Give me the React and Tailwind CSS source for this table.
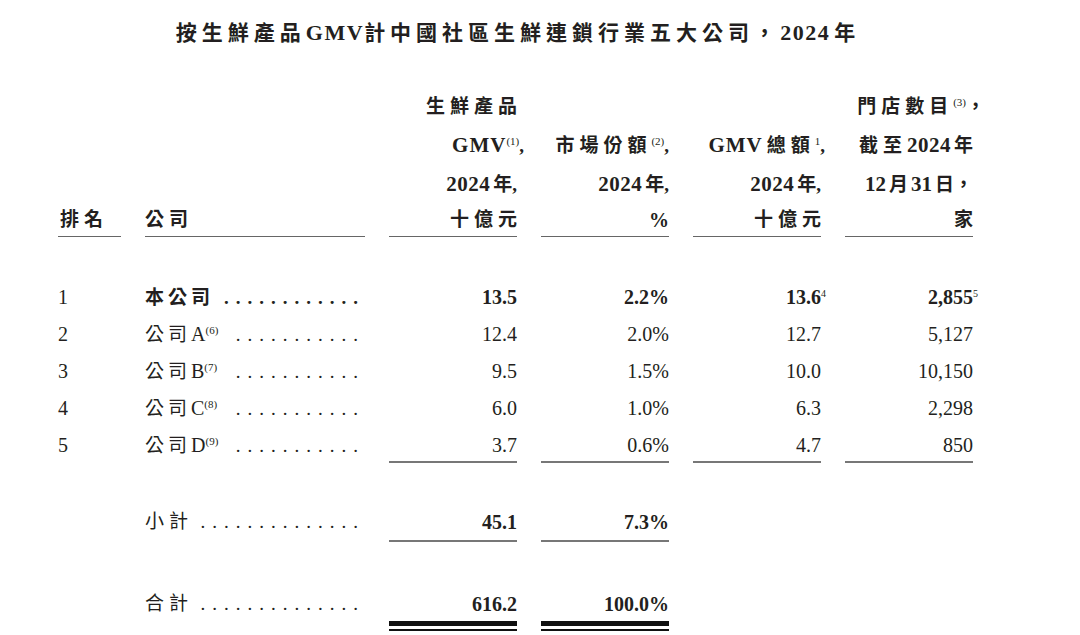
import React from 'react';

const cols = 'grid grid-cols-[63px_220px_128px_128px_128px_128px] gap-x-6';

function Sup({ children }) {
  return <span className="text-[11px] leading-none align-[7px] font-normal">{children}</span>;
}

function Leader({ n }) {
  return (
    <span className="flex-1 flex justify-end">
      <span className="shrink-0 whitespace-nowrap tracking-[7px]">{'.'.repeat(n)}</span>
    </span>
  );
}

const rows = [
  { rank: '1', name: '本公司', sup: '', bold: true, v: ['13.5', '2.2%', '13.6', '2,855'], s: ['4', '5'] },
  { rank: '2', name: '公司', letter: 'A', sup: '(6)', v: ['12.4', '2.0%', '12.7', '5,127'] },
  { rank: '3', name: '公司', letter: 'B', sup: '(7)', v: ['9.5', '1.5%', '10.0', '10,150'] },
  { rank: '4', name: '公司', letter: 'C', sup: '(8)', v: ['6.0', '1.0%', '6.3', '2,298'] },
  { rank: '5', name: '公司', letter: 'D', sup: '(9)', v: ['3.7', '0.6%', '4.7', '850'], last: true },
];

export default function App() {
  return (
    <div className="w-[1080px] h-[635px] bg-white overflow-hidden text-[#231f20] font-['Liberation_Serif','Noto_Sans_CJK_TC',serif]">
      <div className="ml-[58px] w-[915px] pt-[18px]">
        {/* Title */}
        <h1 className="text-center text-[21px] leading-[30px] font-bold">
          <span className="tracking-[5px]">按生鮮產品</span>
          <span className="text-[22px] tracking-[1.5px]">GMV</span>
          <span className="tracking-[5px]">計中國社區生鮮連鎖行業五大公司，</span>
          <span className="text-[22px] tracking-[1.5px]">2024</span>
          <span className="ml-[4px]">年</span>
        </h1>

        {/* Header */}
        <div className={`${cols} items-end mt-[40px] text-[19px] font-bold`}>
          <div className="border-b-[1.5px] border-[#666] leading-[32px] pl-[2px]">
            <span className="tracking-[5px]">排名</span>
          </div>
          <div className="border-b-[1.5px] border-[#666] leading-[32px]">
            <span className="tracking-[5px]">公司</span>
          </div>
          <div className="border-b-[1.5px] border-[#666] text-right">
            <div className="leading-[38px]"><span className="tracking-[5px] mr-[-5px]">生鮮產品</span></div>
            <div className="leading-[38px] mr-[-7px]"><span className="text-[21px] tracking-[1px]">GMV</span><Sup>(1)</Sup>,</div>
            <div className="leading-[38px]"><span className="text-[21px] tracking-[0.5px]">2024</span><span className="ml-[3px]">年</span>,</div>
            <div className="leading-[32px]"><span className="tracking-[5px] mr-[-5px]">十億元</span></div>
          </div>
          <div className="border-b-[1.5px] border-[#666] text-right">
            <div className="leading-[38px]"><span className="tracking-[5px]">市場份額</span><Sup>(2)</Sup>,</div>
            <div className="leading-[38px]"><span className="text-[21px] tracking-[0.5px]">2024</span><span className="ml-[3px]">年</span>,</div>
            <div className="leading-[32px] text-[20px]">%</div>
          </div>
          <div className="border-b-[1.5px] border-[#666] text-right">
            <div className="leading-[38px] mr-[-4px]"><span className="text-[21px] tracking-[1px]">GMV</span><span className="tracking-[5px] ml-[4px]">總額</span><Sup>1</Sup>,</div>
            <div className="leading-[38px]"><span className="text-[21px] tracking-[0.5px]">2024</span><span className="ml-[3px]">年</span>,</div>
            <div className="leading-[32px]"><span className="tracking-[5px] mr-[-5px]">十億元</span></div>
          </div>
          <div className="border-b-[1.5px] border-[#666] text-right">
            <div className="leading-[38px] mr-[-12px]"><span className="tracking-[5px]">門店數目</span><Sup>(3)</Sup>，</div>
            <div className="leading-[38px]"><span className="tracking-[5px]">截至</span><span className="text-[21px] tracking-[0.5px]">2024</span><span className="ml-[3px]">年</span></div>
            <div className="leading-[38px]"><span className="text-[21px]">12</span><span className="mx-[3px]">月</span><span className="text-[21px]">31</span><span className="ml-[3px]">日</span>，</div>
            <div className="leading-[32px]">家</div>
          </div>
        </div>

        {/* Data rows */}
        <div className="mt-[42px] text-[20px]">
          {rows.map((r) => {
            const cell = r.last ? 'leading-[31px] pt-[3px]' : 'leading-[37px]';
            const num = r.last
              ? 'leading-[31px] pt-[3px] text-right border-b-2 border-[#777]'
              : 'leading-[37px] text-right';
            return (
              <div key={r.rank} className={`${cols} items-start ${r.bold ? 'font-bold' : ''}`}>
                <div className={`${cell} font-normal`}>{r.rank}</div>
                <div className={`${cell} flex text-[19px]`}>
                  {r.bold ? (
                    <span className="tracking-[4px] mr-[2px]">{r.name}</span>
                  ) : (
                    <span className="mr-[6px] whitespace-nowrap">
                      <span className="tracking-[4px]">{r.name}</span>
                      <span className="text-[20px]">{r.letter}</span>
                      <Sup>{r.sup}</Sup>
                    </span>
                  )}
                  <Leader n={r.bold ? 12 : 11} />
                </div>
                <div className={num}>{r.v[0]}</div>
                <div className={num}>{r.v[1]}</div>
                <div className={num}>
                  {r.v[2]}
                  {r.s && <span className="text-[10px] leading-none align-[7px] font-normal mr-[-5px]">{r.s[0]}</span>}
                </div>
                <div className={num}>
                  {r.v[3]}
                  {r.s && <span className="text-[10px] leading-none align-[7px] font-normal mr-[-5px]">{r.s[1]}</span>}
                </div>
              </div>
            );
          })}
        </div>

        {/* Subtotal */}
        <div className={`${cols} items-start mt-[44px] text-[20px]`}>
          <div />
          <div className="leading-[30px] pb-[3px] flex text-[19px]">
            <span className="tracking-[5px] mr-[2px]">小計</span>
            <Leader n={14} />
          </div>
          <div className="leading-[30px] pb-[3px] text-right font-bold border-b-2 border-[#777]">45.1</div>
          <div className="leading-[30px] pb-[3px] text-right font-bold border-b-2 border-[#777]">7.3%</div>
          <div />
          <div />
        </div>

        {/* Total */}
        <div className={`${cols} items-start mt-[47px] text-[20px]`}>
          <div />
          <div className="leading-[30px] flex text-[19px]">
            <span className="tracking-[5px] mr-[2px]">合計</span>
            <Leader n={14} />
          </div>
          <div>
            <div className="leading-[30px] pb-[1.5px] text-right font-bold border-b-[5px] border-[#111]">616.2</div>
            <div className="mt-[3px] h-[2px] bg-[#111]" />
          </div>
          <div>
            <div className="leading-[30px] pb-[1.5px] text-right font-bold border-b-[5px] border-[#111]">100.0%</div>
            <div className="mt-[3px] h-[2px] bg-[#111]" />
          </div>
          <div />
          <div />
        </div>
      </div>
    </div>
  );
}
